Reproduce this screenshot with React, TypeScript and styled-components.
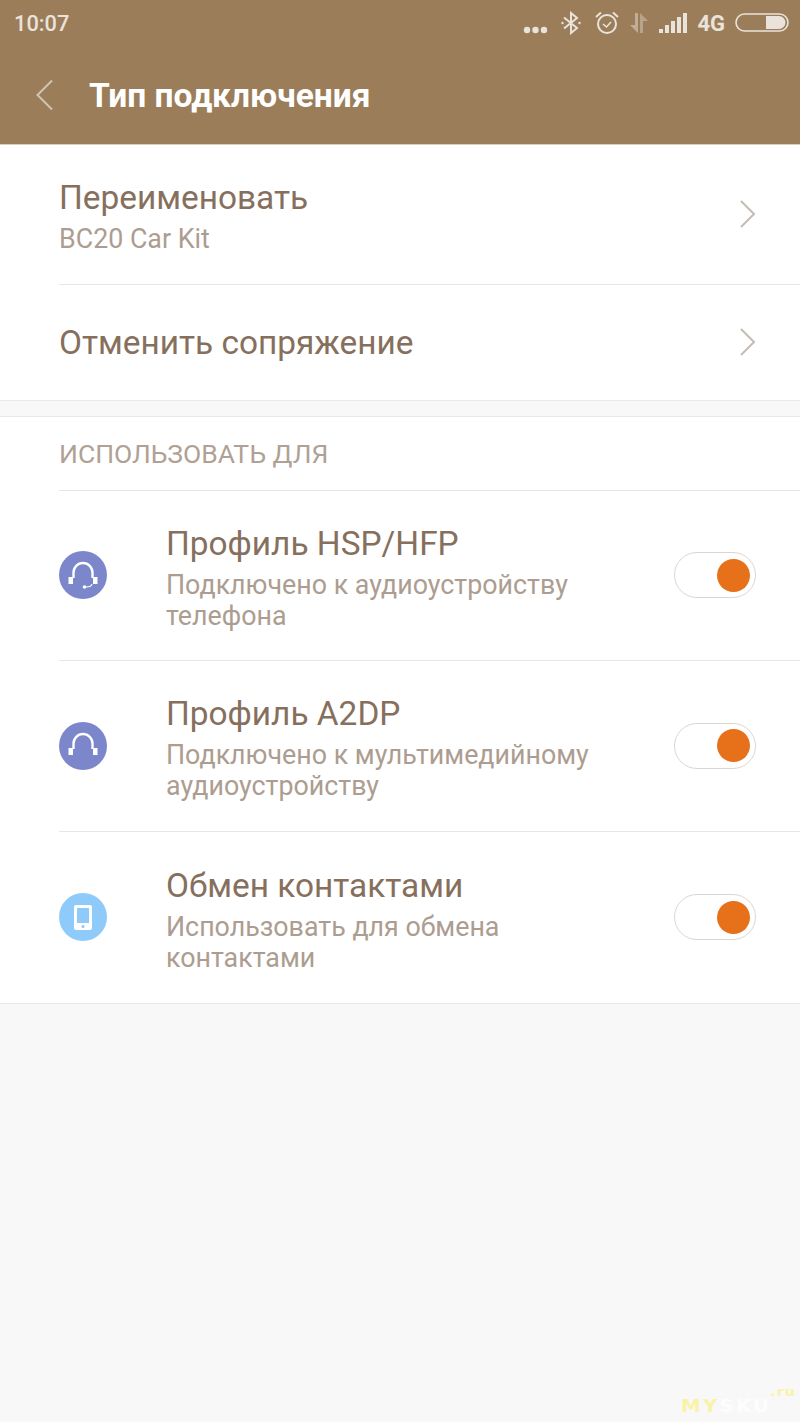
import React from 'react';
import styled, {createGlobalStyle} from 'styled-components';

const Global = createGlobalStyle`
    html, body {
        margin: 0;
        padding: 0;
        background: #f8f8f8;
    }
    body {
        font-family: Roboto, "Noto Sans", sans-serif;
    }
`;
const Page = styled.div`
    position: relative;
    width: 800px;
    height: 1422px;
    overflow: hidden;
    background: #f8f8f8;
`;
const Header = styled.header`
    height: 144px;
    background: #9b7d5a;
    border-bottom: 1px solid #d9cdbf;
    display: flex;
    flex-direction: column;
`;
const StatusBar = styled.div`
    height: 46px;
    display: flex;
    align-items: center;
    justify-content: space-between;
    padding: 0 11px 0 14px;
    color: #e9e3dc;
`;
const Clock = styled.span`
    font-size: 21.8px;
    font-weight: 500;
`;
const StatusIcons = styled.div`
    display: flex;
    align-items: center;
    gap: 10px;
`;
const DotsSlot = styled.div`
    display: flex;
    margin: 14px 2px 0 0;
`;
const BluetoothSlot = styled.div`
    display: flex;
    margin-right: 3px;
`;
const NetLabel = styled.span`
    font-size: 22px;
    font-weight: 700;
`;
const TitleBar = styled.div`
    flex: 1;
    display: flex;
    align-items: center;
    padding: 0 0 0 35px;
    gap: 36px;
`;
const Title = styled.h1`
    margin: 0;
    font-size: 33.5px;
    font-weight: 700;
    color: #ffffff;
`;
const Section = styled.section`
    background: #ffffff;
    border-bottom: 1px solid #e8e8e8;
`;
const UsageSection = styled(Section)`
    margin-top: 15px;
    border-top: 1px solid #e8e8e8;
`;
const NavRow = styled.div<{$height: number; $divided?: boolean}>`
    height: ${p => p.$height}px;
    margin-left: 59px;
    padding-right: 43px;
    box-sizing: border-box;
    display: flex;
    align-items: center;
    justify-content: space-between;
    border-bottom: ${p => (p.$divided ? '1px solid #e8e6e3' : 'none')};
`;
const NavText = styled.div`
    display: flex;
    flex-direction: column;
`;
const RowTitle = styled.div`
    font-size: 33.4px;
    line-height: 48px;
    color: #86705d;
`;
const RowSub = styled.div`
    font-size: 26.8px;
    line-height: 31px;
    color: #ac9d90;
    ${RowTitle} + & {
        margin-top: 2px;
    }
`;
const SectionLabel = styled.div`
    height: 74px;
    margin-left: 59px;
    padding-bottom: 1px;
    box-sizing: border-box;
    display: flex;
    align-items: center;
    font-size: 26.5px;
    color: #b0a196;
    border-bottom: 1px solid #e8e6e3;
`;
const ProfileRow = styled.div<{$height: number; $divided?: boolean}>`
    height: ${p => p.$height}px;
    margin-left: 59px;
    padding-right: 44px;
    box-sizing: border-box;
    display: flex;
    align-items: center;
    border-bottom: ${p => (p.$divided ? '1px solid #e8e6e3' : 'none')};
`;
const Badge = styled.div<{$color: string}>`
    width: 48px;
    height: 48px;
    margin-bottom: 1px;
    border-radius: 50%;
    flex-shrink: 0;
    background: ${p => p.$color};
    display: flex;
    align-items: center;
    justify-content: center;
`;
const ProfileText = styled.div`
    flex: 1;
    margin-left: 59px;
`;
const Toggle = styled.div`
    width: 82px;
    height: 46px;
    margin-bottom: 1px;
    box-sizing: border-box;
    border: 1px solid #dcd6d0;
    border-radius: 23px;
    background: #ffffff;
    display: flex;
    align-items: center;
    justify-content: flex-end;
    padding-right: 5px;
`;
const Knob = styled.div`
    width: 33px;
    height: 33px;
    border-radius: 50%;
    background: #e7711b;
`;
const Watermark = styled.div`
    position: absolute;
    left: 681px;
    bottom: 7px;
    font-family: "DejaVu Sans", sans-serif;
    font-size: 18px;
    line-height: 18px;
    font-weight: 700;
    letter-spacing: 2px;
    color: #fdfdfd;
    transform: scaleX(1.1);
    transform-origin: left center;
`;
const WatermarkYellow = styled.span`
    color: #f9f3a8;
`;
const WatermarkTld = styled.span`
    position: absolute;
    left: 81px;
    top: -14px;
    font-size: 13px;
    letter-spacing: 1px;
    color: #f9f3a8;
`;

const BackChevron = () => (
    <svg width="18" height="30" viewBox="0 0 18 30" fill="none">
        <path d="M17 0.5 L2.5 15 L17 29.5" stroke="#d2c5b5" strokeWidth="2"/>
    </svg>
);
const RowChevron = () => (
    <svg width="18" height="30" viewBox="0 0 18 30" fill="none">
        <path d="M2 1 L15 14 L2 27" stroke="#c4bcb5" strokeWidth="2"/>
    </svg>
);

const Dots = () => (
    <svg width="25" height="8" viewBox="0 0 25 8" fill="#e9e3dc">
        <circle cx="4" cy="4" r="3.2"/>
        <circle cx="12.5" cy="4" r="3.2"/>
        <circle cx="21" cy="4" r="3.2"/>
    </svg>
);
const Bluetooth = () => (
    <svg width="22" height="24" viewBox="0 0 22 24" fill="none" stroke="#e9e3dc" strokeWidth="2">
        <path d="M4 6.5 L17 17 L11 22 V2 L17 7 L4 17.5"/>
        <circle cx="2.5" cy="12" r="1.2" fill="#e9e3dc" stroke="none"/>
        <circle cx="19.5" cy="12" r="1.2" fill="#e9e3dc" stroke="none"/>
    </svg>
);
const Alarm = () => (
    <svg width="24" height="24" viewBox="0 0 24 24" fill="none" stroke="#e9e3dc" strokeWidth="2">
        <circle cx="12" cy="13" r="9"/>
        <path d="M8 13 L11.5 16 L16 11" strokeWidth="1.6"/>
        <path d="M1 6 L6 1.5 M23 6 L18 1.5"/>
    </svg>
);
const Transfer = () => (
    <svg width="20" height="22" viewBox="0 0 20 22">
        <path d="M6 1 H9 V21 L1 13 H6 Z" fill="#c0ad96"/>
        <path d="M11 21 H14 V9 H19 L11 1 Z" fill="#b9a48b"/>
    </svg>
);
const Signal = () => (
    <svg width="28" height="20" viewBox="0 0 28 20" fill="#e9e3dc">
        <rect x="0" y="16" width="4" height="4"/>
        <rect x="6" y="12" width="4" height="8"/>
        <rect x="12" y="8" width="4" height="12"/>
        <rect x="18" y="4" width="4" height="16"/>
        <rect x="24" y="0" width="4" height="20"/>
    </svg>
);
const Battery = () => (
    <svg width="54" height="20" viewBox="0 0 54 20" fill="none">
        <rect x="1" y="1" width="52" height="17" rx="8.5" stroke="#e9e3dc" strokeWidth="1.6"/>
        <path d="M31 3 H44 A6.5 6.5 0 0 1 44 16 H31 Z" fill="#e9e3dc"/>
    </svg>
);
const HeadsetIcon: React.FC<{mic?: boolean}> = ({mic}) => (
    <svg width="48" height="48" viewBox="0 0 48 48" fill="none">
        <path d="M14.5 27 V21.5 A9.5 9.5 0 0 1 33.5 21.5 V27" stroke="#fff" strokeWidth="2.4"/>
        <rect x="9.5" y="26" width="4.5" height="7" fill="#fff"/>
        <rect x="34" y="26" width="4.5" height="7" fill="#fff"/>
        {mic && <path d="M33 33 Q32.5 36 27 36" stroke="#fff" strokeWidth="1.2"/>}
        {mic && <circle cx="25.5" cy="36" r="1.8" fill="#fff"/>}
    </svg>
);
const PhoneIcon = () => (
    <svg width="18" height="25" viewBox="0 0 18 25">
        <path fillRule="evenodd" fill="#fff" d="M2 0 H16 A2 2 0 0 1 18 2 V23 A2 2 0 0 1 16 25 H2 A2 2 0 0 1 0 23 V2 A2 2 0 0 1 2 0 Z M3 3 V18 H15 V3 Z"/>
        <circle cx="9" cy="21.5" r="1.6" fill="#8fcbfa"/>
    </svg>
);

const profiles = [
    {title: 'Профиль HSP/HFP', sub: ['Подключено к аудиоустройству', 'телефона'], color: '#7c86cb', icon: <HeadsetIcon mic/>, height: 170},
    {title: 'Профиль A2DP', sub: ['Подключено к мультимедийному', 'аудиоустройству'], color: '#7c86cb', icon: <HeadsetIcon/>, height: 171},
    {title: 'Обмен контактами', sub: ['Использовать для обмена', 'контактами'], color: '#8fcbfa', icon: <PhoneIcon/>, height: 171},
];

const App: React.FC = () => (
    <Page>
        <Global/>
        <Header>
            <StatusBar>
                <Clock>10:07</Clock>
                <StatusIcons>
                    <DotsSlot><Dots/></DotsSlot>
                    <BluetoothSlot><Bluetooth/></BluetoothSlot>
                    <Alarm/>
                    <Transfer/>
                    <Signal/>
                    <NetLabel>4G</NetLabel>
                    <Battery/>
                </StatusIcons>
            </StatusBar>
            <TitleBar>
                <BackChevron/>
                <Title>Тип подключения</Title>
            </TitleBar>
        </Header>
        <Section>
            <NavRow $height={140} $divided>
                <NavText>
                    <RowTitle>Переименовать</RowTitle>
                    <RowSub>BC20 Car Kit</RowSub>
                </NavText>
                <RowChevron/>
            </NavRow>
            <NavRow $height={115}>
                <RowTitle>Отменить сопряжение</RowTitle>
                <RowChevron/>
            </NavRow>
        </Section>
        <UsageSection>
            <SectionLabel>ИСПОЛЬЗОВАТЬ ДЛЯ</SectionLabel>
            {profiles.map((p, i) => (
                <ProfileRow key={p.title} $height={p.height} $divided={i < profiles.length - 1}>
                    <Badge $color={p.color}>{p.icon}</Badge>
                    <ProfileText>
                        <RowTitle>{p.title}</RowTitle>
                        {p.sub.map(line => <RowSub key={line}>{line}</RowSub>)}
                    </ProfileText>
                    <Toggle><Knob/></Toggle>
                </ProfileRow>
            ))}
        </UsageSection>
        <Watermark>
            <WatermarkYellow>MY</WatermarkYellow>SKU
            <WatermarkTld>.ru</WatermarkTld>
        </Watermark>
    </Page>
);
export default App;
